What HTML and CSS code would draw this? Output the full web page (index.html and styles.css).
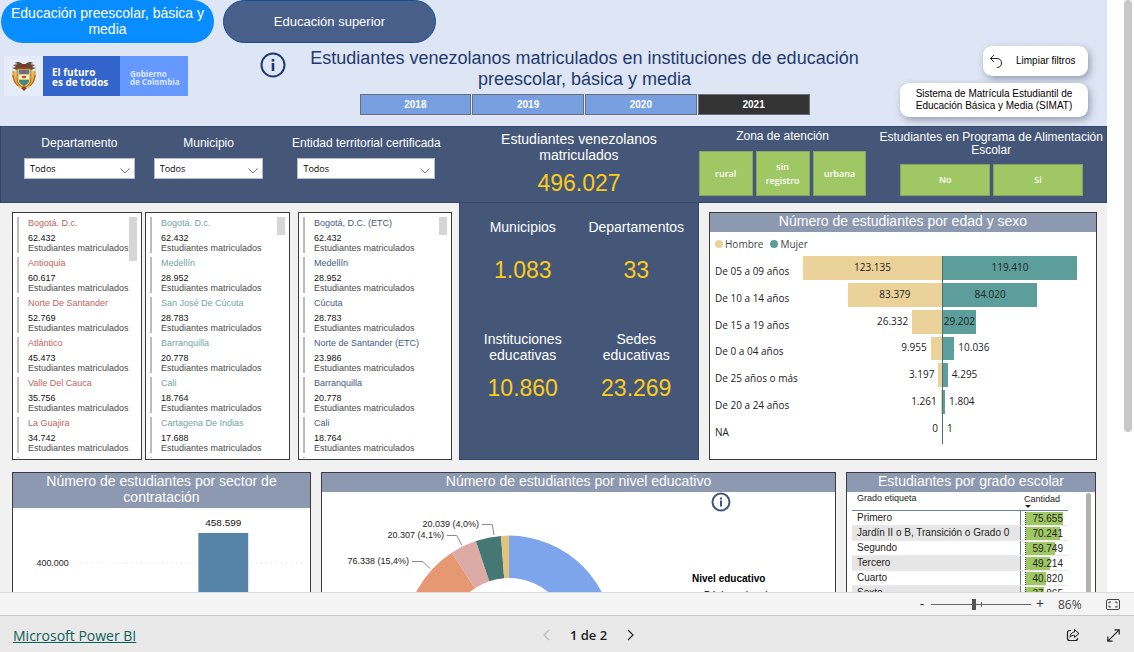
FILE: index.html
```html
<!DOCTYPE html>
<html lang="es">
<head>
<meta charset="utf-8">
<title>Estudiantes venezolanos matriculados</title>
<link rel="stylesheet" href="styles.css">
</head>
<body>
<main class="viewport">
  <div class="report">
    <header class="header">
      <nav class="tabs">
        <button class="tab tab-active" type="button">Educación preescolar, básica y media</button>
        <button class="tab tab-secondary" type="button">Educación superior</button>
      </nav>
      <div class="masthead">
        <div class="brand">
          <div class="brand-shield">
            <svg width="26" height="30" viewBox="0 0 26 30" aria-hidden="true">
              <path d="M13 5C11 1 6 0 4 2l3 1-5 1 3 2-4 1 5 2 7-1 7 1 5-2-4-1 3-2-5-1 3-1c-2-2-7-1-9 3z" fill="#6a4a34"/>
              <path d="M3 10c-1 7 2 13 7 16M23 10c1 7-2 13-7 16" fill="none" stroke="#e2ae35" stroke-width="3.500"/>
              <path d="M2 14c0 4 2 8 5 11M24 14c0 4-2 8-5 11" fill="none" stroke="#b9483a" stroke-width="1"/>
              <path d="M6 8h14v10c0 4-3 7-7 9-4-2-7-5-7-9z" fill="#edc24a" stroke="#a8652a"/>
              <path d="M8 9h10v4H8z" fill="#4a7fb8"/>
              <path d="M8 14h10v4H8z" fill="#f3efe4"/>
              <path d="M8 19h10c0 3-2 4-5 6-3-2-5-3-5-6z" fill="#3f8a86"/>
              <path d="M11 10h4v2h-4zM11 15h4v2h-4z" fill="#cc4633"/>
              <path d="M10 27l3-2 3 2-3 3z" fill="#a8352a"/>
              <path d="M11 3h4v4h-4z" fill="#8a2f2a"/>
            </svg>
          </div>
          <div class="brand-motto">El futuro<br>es de todos</div>
          <div class="brand-gov">Gobierno<br>de Colombia</div>
        </div>
        <svg class="info" width="26" height="26" viewBox="0 0 26 26" role="img" aria-label="Información">
          <circle cx="13" cy="13" r="11.5" fill="none" stroke="#1f3a73" stroke-width="2"/>
          <path d="M11.7 7h2.6v2.4h-2.6zM11.7 11h2.6v8h-2.6z" fill="#1f3a73"/>
        </svg>
        <div class="heading">
          <h1 class="title">Estudiantes venezolanos matriculados en instituciones de educación preescolar, básica y media</h1>
          <div class="years">
            <button class="year" type="button">2018</button>
            <button class="year" type="button">2019</button>
            <button class="year" type="button">2020</button>
            <button class="year year-active" type="button">2021</button>
          </div>
        </div>
        <div class="actions">
          <button class="pill pill-clear" type="button">
            <svg width="14" height="15" viewBox="0 0 14 15" aria-hidden="true"><path d="M5 1L1.500 4.500 5 8M1.500 4.500H8c3 0 4.500 2 4.500 4.500S11 13.500 8 13.500" fill="none" stroke="#222"/></svg>
            <span>Limpiar filtros</span>
          </button>
          <button class="pill pill-source" type="button">Sistema de Matrícula Estudiantil de Educación Básica y Media (SIMAT)</button>
        </div>
      </div>
    </header>

    <section class="filters">
      <div class="filter filter-dep">
        <label class="filter-label" for="dep">Departamento</label>
        <div class="select"><select id="dep"><option>Todos</option></select>
          <svg width="10" height="6" viewBox="0 0 10 6" aria-hidden="true"><path d="M.5.5L5 5 9.500.5" fill="none" stroke="#777"/></svg></div>
      </div>
      <div class="filter filter-mun">
        <label class="filter-label" for="mun">Municipio</label>
        <div class="select"><select id="mun"><option>Todos</option></select>
          <svg width="10" height="6" viewBox="0 0 10 6" aria-hidden="true"><path d="M.5.5L5 5 9.500.5" fill="none" stroke="#777"/></svg></div>
      </div>
      <div class="filter filter-etc">
        <label class="filter-label" for="etc">Entidad territorial certificada</label>
        <div class="select"><select id="etc"><option>Todos</option></select>
          <svg width="10" height="6" viewBox="0 0 10 6" aria-hidden="true"><path d="M.5.5L5 5 9.500.5" fill="none" stroke="#777"/></svg></div>
      </div>
      <div class="total">
        <div class="kpi-label">Estudiantes venezolanos<br>matriculados</div>
        <div class="kpi-value">496.027</div>
      </div>
      <div class="slicer slicer-zone">
        <div class="slicer-title">Zona de atención</div>
        <div class="slicer-buttons">
          <button class="chip" type="button">rural</button>
          <button class="chip" type="button">sin registro</button>
          <button class="chip" type="button">urbana</button>
        </div>
      </div>
      <div class="slicer slicer-pae">
        <div class="slicer-title">Estudiantes en Programa de Alimentación Escolar</div>
        <div class="slicer-buttons">
          <button class="chip" type="button">No</button>
          <button class="chip" type="button">Si</button>
        </div>
      </div>
    </section>

    <section class="row-main">
      <div class="lists">
        <div class="panel list-panel list-dep">
          <ul class="list">
            <li><b>Bogotá. D.c.</b><span>62.432</span><small>Estudiantes matriculados</small></li>
            <li><b>Antioquia</b><span>60.617</span><small>Estudiantes matriculados</small></li>
            <li><b>Norte De Santander</b><span>52.769</span><small>Estudiantes matriculados</small></li>
            <li><b>Atlántico</b><span>45.473</span><small>Estudiantes matriculados</small></li>
            <li><b>Valle Del Cauca</b><span>35.756</span><small>Estudiantes matriculados</small></li>
            <li><b>La Guajira</b><span>34.742</span><small>Estudiantes matriculados</small></li>
          </ul>
          <div class="thumb thumb-long"></div>
        </div>
        <div class="panel list-panel list-mun">
          <ul class="list">
            <li><b>Bogotá. D.c.</b><span>62.432</span><small>Estudiantes matriculados</small></li>
            <li><b>Medellín</b><span>28.952</span><small>Estudiantes matriculados</small></li>
            <li><b>San José De Cúcuta</b><span>28.783</span><small>Estudiantes matriculados</small></li>
            <li><b>Barranquilla</b><span>20.778</span><small>Estudiantes matriculados</small></li>
            <li><b>Cali</b><span>18.764</span><small>Estudiantes matriculados</small></li>
            <li><b>Cartagena De Indias</b><span>17.688</span><small>Estudiantes matriculados</small></li>
          </ul>
          <div class="thumb"></div>
        </div>
        <div class="panel list-panel list-etc">
          <ul class="list">
            <li><b>Bogotá, D.C. (ETC)</b><span>62.432</span><small>Estudiantes matriculados</small></li>
            <li><b>Medellín</b><span>28.952</span><small>Estudiantes matriculados</small></li>
            <li><b>Cúcuta</b><span>28.783</span><small>Estudiantes matriculados</small></li>
            <li><b>Norte de Santander (ETC)</b><span>23.986</span><small>Estudiantes matriculados</small></li>
            <li><b>Barranquilla</b><span>20.778</span><small>Estudiantes matriculados</small></li>
            <li><b>Cali</b><span>18.764</span><small>Estudiantes matriculados</small></li>
          </ul>
          <div class="thumb"></div>
        </div>
      </div>

      <div class="kpis">
        <div class="kpi kpi-short"><div class="kpi-label">Municipios</div><div class="kpi-value">1.083</div></div>
        <div class="kpi kpi-short"><div class="kpi-label">Departamentos</div><div class="kpi-value">33</div></div>
        <div class="kpi"><div class="kpi-label">Instituciones<br>educativas</div><div class="kpi-value">10.860</div></div>
        <div class="kpi"><div class="kpi-label">Sedes<br>educativas</div><div class="kpi-value">23.269</div></div>
      </div>

      <div class="pyramid-cell">
        <div class="panel pyramid-panel">
          <h2 class="panel-title">Número de estudiantes por edad y sexo</h2>
          <div class="legend"><span class="dot dot-h"></span>Hombre<span class="dot dot-m"></span>Mujer</div>
          <div class="pyramid">
            <div class="age"><span class="age-name">De 05 a 09 años</span>
              <div class="side side-h"><span class="bar" style="width:100%">123.135</span></div>
              <div class="side side-m"><span class="bar" style="width:97%">119.410</span></div></div>
            <div class="age"><span class="age-name">De 10 a 14 años</span>
              <div class="side side-h"><span class="bar" style="width:67.7%">83.379</span></div>
              <div class="side side-m"><span class="bar" style="width:68.2%">84.020</span></div></div>
            <div class="age"><span class="age-name">De 15 a 19 años</span>
              <div class="side side-h"><span class="bar" style="width:21.4%"></span><span class="out">26.332</span></div>
              <div class="side side-m"><span class="bar" style="width:23.7%">29.202</span></div></div>
            <div class="age"><span class="age-name">De 0 a 04 años</span>
              <div class="side side-h"><span class="bar" style="width:8.1%"></span><span class="out">9.955</span></div>
              <div class="side side-m"><span class="bar" style="width:8.2%"></span><span class="out">10.036</span></div></div>
            <div class="age"><span class="age-name">De 25 años o más</span>
              <div class="side side-h"><span class="bar" style="width:2.6%"></span><span class="out">3.197</span></div>
              <div class="side side-m"><span class="bar" style="width:3.5%"></span><span class="out">4.295</span></div></div>
            <div class="age"><span class="age-name">De 20 a 24 años</span>
              <div class="side side-h"><span class="bar" style="width:1%"></span><span class="out">1.261</span></div>
              <div class="side side-m"><span class="bar" style="width:1.5%"></span><span class="out">1.804</span></div></div>
            <div class="age"><span class="age-name">NA</span>
              <div class="side side-h"><span class="bar" style="width:0%"></span><span class="out">0</span></div>
              <div class="side side-m"><span class="bar" style="width:0%"></span><span class="out">1</span></div></div>
          </div>
        </div>
      </div>
    </section>

    <section class="row-charts">
      <div class="panel">
        <h2 class="panel-title">Número de estudiantes por sector de contratación</h2>
        <svg class="chart" viewBox="0 0 298 240" role="img" aria-label="Estudiantes por sector">
          <path d="M64 55H294" stroke="#dcdcdc" stroke-dasharray="1 4"/>
          <rect x="186" y="25" width="50" height="215" fill="#5584a8"/>
          <text class="chart-value" x="211" y="18" text-anchor="middle">458.599</text>
          <text class="chart-label" x="56" y="58" text-anchor="end">400.000</text>
        </svg>
      </div>
      <div class="panel level-panel">
        <h2 class="panel-title">Número de estudiantes por nivel educativo</h2>
        <div class="level-body">
          <svg class="donut" width="320" height="260" viewBox="0 0 320 260" role="img" aria-label="Estudiantes por nivel educativo">
            <path d="M187 43.600A104.400 104.400 0 1 1 82.600 145.600L125 146.600A62 62 0 1 0 187 86z" fill="#7ca5ec"/>
            <path d="M82.600 145.600A104.400 104.400 0 0 1 129.700 60.700L153 96.200A62 62 0 0 0 125 146.600z" fill="#e69873"/>
            <path d="M129.700 60.700A104.400 104.400 0 0 1 153.900 49L167.300 89.200A62 62 0 0 0 153 96.200z" fill="#dcaba6"/>
            <path d="M153.900 49A104.400 104.400 0 0 1 179 43.900L182.200 86.200A62 62 0 0 0 167.300 89.200z" fill="#457874"/>
            <path d="M179 43.900A104.400 104.400 0 0 1 187 43.600V86A62 62 0 0 0 182.200 86.200z" fill="#e3c279"/>
            <path d="M160 32.500H170.300L172 43M124.700 43.500H134.700L139.700 53M90 69.500H100.700L108.300 76.700" fill="none" stroke="#888"/>
            <text class="chart-label" x="157" y="35" text-anchor="end">20.039 (4,0%)</text>
            <text class="chart-label" x="122" y="46" text-anchor="end">20.307 (4,1%)</text>
            <text class="chart-label" x="87" y="72" text-anchor="end">76.338 (15,4%)</text>
          </svg>
          <div class="level-side">
            <svg class="level-info" width="20" height="20" viewBox="0 0 20 20" role="img" aria-label="Información">
              <circle cx="10" cy="10" r="8.500" fill="none" stroke="#3f5580" stroke-width="2"/>
              <path d="M9 5.500h2v2H9zM9 8.500h2v6H9z" fill="#3f5580"/>
            </svg>
            <div class="level-legend">
              <strong>Nivel educativo</strong>
              <span class="level-item"><i class="dot dot-level"></i>Básica primaria</span>
            </div>
          </div>
        </div>
      </div>
      <div class="panel">
        <h2 class="panel-title">Estudiantes por grado escolar</h2>
        <div class="grade-body">
          <table class="grades">
            <thead><tr><th>Grado etiqueta</th><th class="qty-head">Cantidad<span class="sort"></span></th></tr></thead>
            <tbody>
              <tr><td>Primero</td><td><div class="qty"><i style="width:100%"></i><span>75.655</span></div></td></tr>
              <tr><td>Jardín II o B, Transición o Grado 0</td><td><div class="qty"><i style="width:93%"></i><span>70.241</span></div></td></tr>
              <tr><td>Segundo</td><td><div class="qty"><i style="width:79%"></i><span>59.749</span></div></td></tr>
              <tr><td>Tercero</td><td><div class="qty"><i style="width:65%"></i><span>49.214</span></div></td></tr>
              <tr><td>Cuarto</td><td><div class="qty"><i style="width:54%"></i><span>40.820</span></div></td></tr>
              <tr><td>Sexto</td><td><div class="qty"><i style="width:50%"></i><span>37.865</span></div></td></tr>
            </tbody>
          </table>
          <div class="grade-scroll"></div>
        </div>
      </div>
    </section>
  </div>
  <div class="scroll-track"><div class="scroll-thumb"></div></div>
</main>

<div class="zoombar">
  <button class="zoom-step" type="button" aria-label="Alejar">-</button>
  <input class="zoom-range" type="range" min="0" max="100" value="43" aria-label="Zoom">
  <button class="zoom-step" type="button" aria-label="Acercar">+</button>
  <output class="zoom-value">86%</output>
  <button class="icon-button" type="button" aria-label="Ajustar a la página">
    <svg width="14" height="11" viewBox="0 0 14 11"><rect x=".5" y=".5" width="13" height="10" rx="1.500" fill="none" stroke="#444"/><path d="M5 3H3v1.500M9 3h2v1.500M5 8H3V6.500M9 8h2V6.500" fill="none" stroke="#444"/></svg>
  </button>
</div>
<footer class="footer">
  <div class="footer-left"><a class="brand-link" href="#">Microsoft Power BI</a></div>
  <div class="pager">
    <button class="icon-button" type="button" aria-label="Página anterior" disabled><svg width="7" height="12" viewBox="0 0 7 12"><path d="M6 1L1 6l5 5" fill="none" stroke="#bbb" stroke-width="1.200"/></svg></button>
    <span>1 de 2</span>
    <button class="icon-button" type="button" aria-label="Página siguiente"><svg width="7" height="12" viewBox="0 0 7 12"><path d="M1 1l5 5-5 5" fill="none" stroke="#222" stroke-width="1.200"/></svg></button>
  </div>
  <div class="footer-right">
    <button class="icon-button" type="button" aria-label="Compartir"><svg width="14" height="14" viewBox="0 0 14 14"><path d="M5 2.500H3.500a2 2 0 0 0-2 2v6a2 2 0 0 0 2 2h6a2 2 0 0 0 2-2V10" fill="none" stroke="#222" stroke-width="1.200"/><path d="M8.500 1.500L13 5.500l-4.500 4V7.300C6.500 7.200 5 7.800 4 9.300c.2-3 1.700-5 4.500-5.400z" fill="none" stroke="#222" stroke-linejoin="round"/></svg></button>
    <button class="icon-button" type="button" aria-label="Pantalla completa"><svg width="13" height="13" viewBox="0 0 13 13"><path d="M7.500.8h4.700v4.700M12.200.8L.8 12.200M.8 7.500v4.700h4.700" fill="none" stroke="#222" stroke-width="1.200"/></svg></button>
  </div>
</footer>
</body>
</html>
```
FILE: styles.css
```css
* { box-sizing: border-box; }
body {
  margin: 0;
  height: 100vh;
  display: flex;
  flex-direction: column;
  font-family: "Liberation Sans", Arial, sans-serif;
  font-size: 10px;
  color: #222;
  background: #fff;
}
button { font-family: inherit; margin: 0; padding: 0; border: 0; background: none; cursor: pointer; }
h1, h2, ul { margin: 0; padding: 0; font-weight: 400; }
svg { display: block; }

.viewport { flex: 1; min-height: 0; display: flex; overflow: hidden; align-items: flex-start; }
.report { flex: 1; min-width: 0; background: #f1f1f1; }
.scroll-track { width: 27px; height: 100%; padding: 0 2px 0 17px; background: #fff; }
.scroll-thumb { height: 73%; border-radius: 4px; background: #c8c8c8; }

/* header */
.header { background: #dee5f4; padding-bottom: 9px; }
.tabs { display: flex; gap: 9px; padding-left: 1px; }
.tab { width: 213px; height: 43px; border-radius: 22px; color: #fff; line-height: 16px; }
.tab-active { background: #078dff; font-size: 14px; padding-bottom: 1px; }
.tab-secondary { background: #485f8a; border: 1px solid #11509a; font-size: 13px; }
.masthead { display: flex; align-items: flex-start; padding: 3px 19px 0 4px; }
.brand { display: flex; margin-top: 10px; height: 40px; color: #fff; font-family: "Open Sans", sans-serif; font-weight: 700; }
.brand-shield { width: 39px; display: flex; align-items: center; justify-content: center; background: #e5ecfa; }
.brand-motto { width: 77px; padding: 11px 0 0 9px; background: #3264cb; font-size: 10px; line-height: 10px; }
.brand-gov { width: 68px; padding: 14px 0 0 10px; background: #6699ff; color: #dbe7ff; font-size: 8px; line-height: 8px; white-space: nowrap; }
.info { margin: 6px 0 0 72px; }
.heading { flex: 1; padding: 2px 17px 0 0; display: flex; flex-direction: column; align-items: center; }
.title { max-width: 570px; font-size: 18px; line-height: 21px; text-align: center; color: #1f3a6e; }
.years { display: flex; gap: 1px; width: 450px; max-width: 100%; margin-top: 4px; }
.year { flex: 1; height: 21px; border: 1px solid #69707c; background: #789fe0; color: #fff; font-size: 10px; font-weight: 700; }
.year-active { background: #333; }
.actions { width: 188px; display: flex; flex-direction: column; align-items: flex-end; gap: 7px; }
.pill { background: #fff; border-radius: 9px; font-size: 10px; line-height: 12px; color: #000; box-shadow: 2px 3px 7px rgba(60, 70, 100, .45); }
.pill-clear { width: 105px; height: 30px; display: flex; align-items: center; gap: 13px; padding-left: 6px; }
.pill-source { width: 100%; height: 34px; }

/* filter bar */
.filters {
  display: grid;
  grid-template-columns: 143fr 145fr 171fr 240fr 180fr 228fr;
  min-height: 77px;
  background: #445779;
  border: 1px solid #33486c;
  color: #fff;
}
.filter { min-width: 0; padding-top: 9px; display: flex; flex-direction: column; align-items: center; gap: 8px; }
.filter-dep { padding-left: 23px; padding-right: 9px; }
.filter-mun { padding-left: 10px; padding-right: 25px; }
.filter-etc { padding-left: 9px; padding-right: 24px; }
.filter-label { font-size: 12px; line-height: 14px; white-space: nowrap; }
.select { display: grid; width: 100%; align-items: center; }
.select > * { grid-area: 1 / 1; }
.select select {
  appearance: none; width: 100%; height: 21px; padding: 0 5px; margin: 0;
  border: 1px solid #b3bccd; border-radius: 0; background: #fff; color: #000;
  font-family: "Open Sans", sans-serif; font-size: 9px;
}
.select svg { justify-self: end; margin: 4px 5px 0 0; pointer-events: none; }
.total { padding-top: 4px; text-align: center; }
.kpi-label { font-size: 14px; line-height: 16px; }
.kpi-value { font-size: 23px; line-height: 28px; color: #fccc19; }
.total .kpi-value { margin-top: 6px; }
.slicer { padding-top: 4px; display: flex; flex-direction: column; }
.slicer-title { font-size: 12px; line-height: 13px; text-align: center; }
.slicer-buttons { display: flex; flex: 1; }
.slicer-zone { padding: 3px 12px 6px 0; }
.slicer-zone .slicer-title { padding-bottom: 8px; }
.slicer-zone .slicer-buttons { gap: 3px; }
.slicer-pae { padding-bottom: 6px; }
.slicer-pae .slicer-title { padding: 0 2px 0 0; }
.slicer-pae .slicer-buttons { gap: 3px; margin: 7px 23px 0 22px; }
.chip {
  flex: 1; min-width: 0; padding: 0 8px; background: #9fc864; color: #fff; border: 1px solid #7fa865;
  font-family: "Open Sans", sans-serif; font-size: 9px; font-weight: 600; line-height: 14px;
}

/* main row */
.row-main { display: grid; grid-template-columns: 459fr 240fr 408fr; }
.row-main > * { min-width: 0; }
.panel { background: #fff; border: 1px solid #3c3c3c; min-width: 0; }
.lists { display: grid; grid-template-columns: 133fr 149fr 158fr; padding: 9px 7px 0 12px; }
.list-dep { margin-right: 3px; }
.list-mun { margin-right: 4px; }
.list-etc { margin-left: 4px; }
.list-panel { position: relative; padding: 4px 4px 1px; }
.list { list-style: none; display: flex; flex-direction: column; gap: 4px; font-size: 9px; }
.list::after { content: ""; width: 2px; height: 1px; background: #bdbab7; }
.list li { border-left: 2px solid #bdbab7; padding-left: 9px; white-space: nowrap; }
.list b { display: block; font-weight: 400; line-height: 12px; margin-bottom: 4px; }
.list span, .list small { display: block; font-size: 9px; line-height: 10px; }
.list span { color: #111; }
.list small { color: #4a4a4a; }
.list-dep b { color: #c0655a; }
.list-mun b { color: #6fa5a3; }
.list-etc b { color: #425a85; }
.thumb { position: absolute; top: 4px; right: 4px; width: 8px; height: 18px; background: #d6d6d6; }
.thumb-long { height: 44px; }

.kpis {
  display: grid; grid-template-columns: 1fr 1fr; grid-template-rows: 112px auto;
  padding: 16px 5px 0 6px; background: #445779; border: 1px solid #33486c; border-top: 0;
  color: #fff; text-align: center;
}
.kpis .kpi-value { margin-top: 11px; }
.kpis .kpi-short .kpi-value { margin-top: 21px; }

.pyramid-cell { padding: 9px 10px 0; }
.pyramid-panel { height: 100%; display: flex; flex-direction: column; }
.panel-title { background: #8d99b0; color: #fff; font-size: 14px; line-height: 16px; padding: 0 20px 3px; text-align: center; }
.legend { display: flex; align-items: center; gap: 2px; padding: 5px 5px 0; line-height: 14px; font-family: "Open Sans", sans-serif; font-size: 10px; color: #444; }
.dot { width: 8px; height: 8px; border-radius: 50%; }
.dot-h { background: #ebd298; }
.dot-m { background: #5c9e9b; margin-left: 5px; }
.pyramid { flex: 1; display: grid; grid-auto-rows: 1fr; padding: 5px 15px 15px 5px; font-family: "Open Sans", sans-serif; font-size: 10px; line-height: 14px; color: #222; }
.age { display: grid; grid-template-columns: 88px 1fr 1fr; }
.age-name { align-self: end; padding-bottom: 5px; white-space: nowrap; }
.side { display: flex; align-items: stretch; min-width: 0; padding-bottom: 3px; }
.side-h { flex-direction: row-reverse; }
.side-m { border-left: 1px solid #4d6f7a; }
.bar { flex: none; display: flex; align-items: center; justify-content: center; padding-bottom: 2px; }
.side-h .bar { background: #ebd298; }
.side-m .bar { background: #5c9e9b; }
.out { align-self: center; margin: 0 4px; padding-bottom: 2px; }

/* chart row */
.row-charts { display: grid; grid-template-columns: 299fr 515fr 250fr; gap: 10px; padding: 12px 11px 12px 12px; }
.chart { width: 100%; }
.chart-value { font-size: 10px; fill: #111; }
.chart-label { font-size: 9px; fill: #222; }
.level-body { display: flex; }
.donut { flex: none; }
.level-side { flex: 1; padding-left: 50px; }
.level-info { margin-left: 19px; }
.level-legend { display: flex; flex-direction: column; margin-top: 61px; font-size: 10px; line-height: 12px; color: #000; }
.level-item { display: flex; align-items: center; gap: 3px; margin-top: 5px; white-space: nowrap; }
.dot-level { background: #7ca5ec; margin-left: 1px; }
.grade-body { display: flex; justify-content: space-between; padding: 1px 4px 0 5px; }
.grades { flex: 1; max-width: 216px; border-collapse: collapse; font-size: 10px; line-height: 12px; height: max-content; color: #222; }
.grades th { padding: 0 0 6px 5px; font-weight: 400; font-size: 9px; line-height: 11px; text-align: left; border-bottom: 1px solid #6b7fa5; }
.grades .qty-head { padding: 0 0 2px 4px; }
.sort { display: block; width: 0; margin-left: 1px; border: 3px solid transparent; border-top-color: #222; border-bottom: 0; }
.grades td { padding: 0 0 0 5px; height: 15px; white-space: nowrap; border-bottom: 1px solid #eaeaea; }
.grades td:first-child { border-right: 1px solid #6b7fa5; }
.grades tr:nth-child(even) td:first-child { background: #e6e6e6; }
.grades td:last-child { width: 48px; padding: 0 5px 0 4px; }
.qty { display: grid; border-left: 1px dotted #333; }
.qty > * { grid-area: 1 / 1; }
.qty i { background: #9fc864; }
.qty span { text-align: right; line-height: 13px; }
.grade-scroll { width: 5px; height: 190px; border-radius: 3px; background: #b3b0ad; }

/* bottom bars */
.zoombar { height: 24px; flex: none; display: flex; align-items: center; justify-content: flex-end; padding-right: 14px; background: #f4f4f4; border-top: 1px solid #dcdcdc; border-bottom: 1px solid #c8c8c8; font-family: "Open Sans", sans-serif; color: #444; }
.zoom-step { width: 18px; font-size: 14px; line-height: 14px; color: #333; }
.zoom-range {
  appearance: none; width: 100px; height: 12px; margin: 0;
  background: linear-gradient(#666, #666) center / 100% 1px no-repeat, linear-gradient(#666, #666) center / 1px 5px no-repeat;
}
.zoom-range::-webkit-slider-thumb { appearance: none; width: 4px; height: 11px; background: #555; }
.zoom-value { width: 42px; padding-left: 9px; margin-right: 15px; font-size: 12px; }
.icon-button { display: flex; align-items: center; }
.footer { height: 36px; flex: none; display: grid; grid-template-columns: 1fr auto 1fr; align-items: center; padding: 2px 14px 0 13px; background: #e9e9e9; font-family: "Open Sans", sans-serif; }
.brand-link { font-size: 14px; color: #0b6158; text-decoration: underline; }
.pager { display: flex; align-items: center; gap: 20px; padding-left: 44px; font-size: 13px; font-weight: 600; color: #222; }
.footer-right { display: flex; justify-content: flex-end; gap: 27px; }
```
